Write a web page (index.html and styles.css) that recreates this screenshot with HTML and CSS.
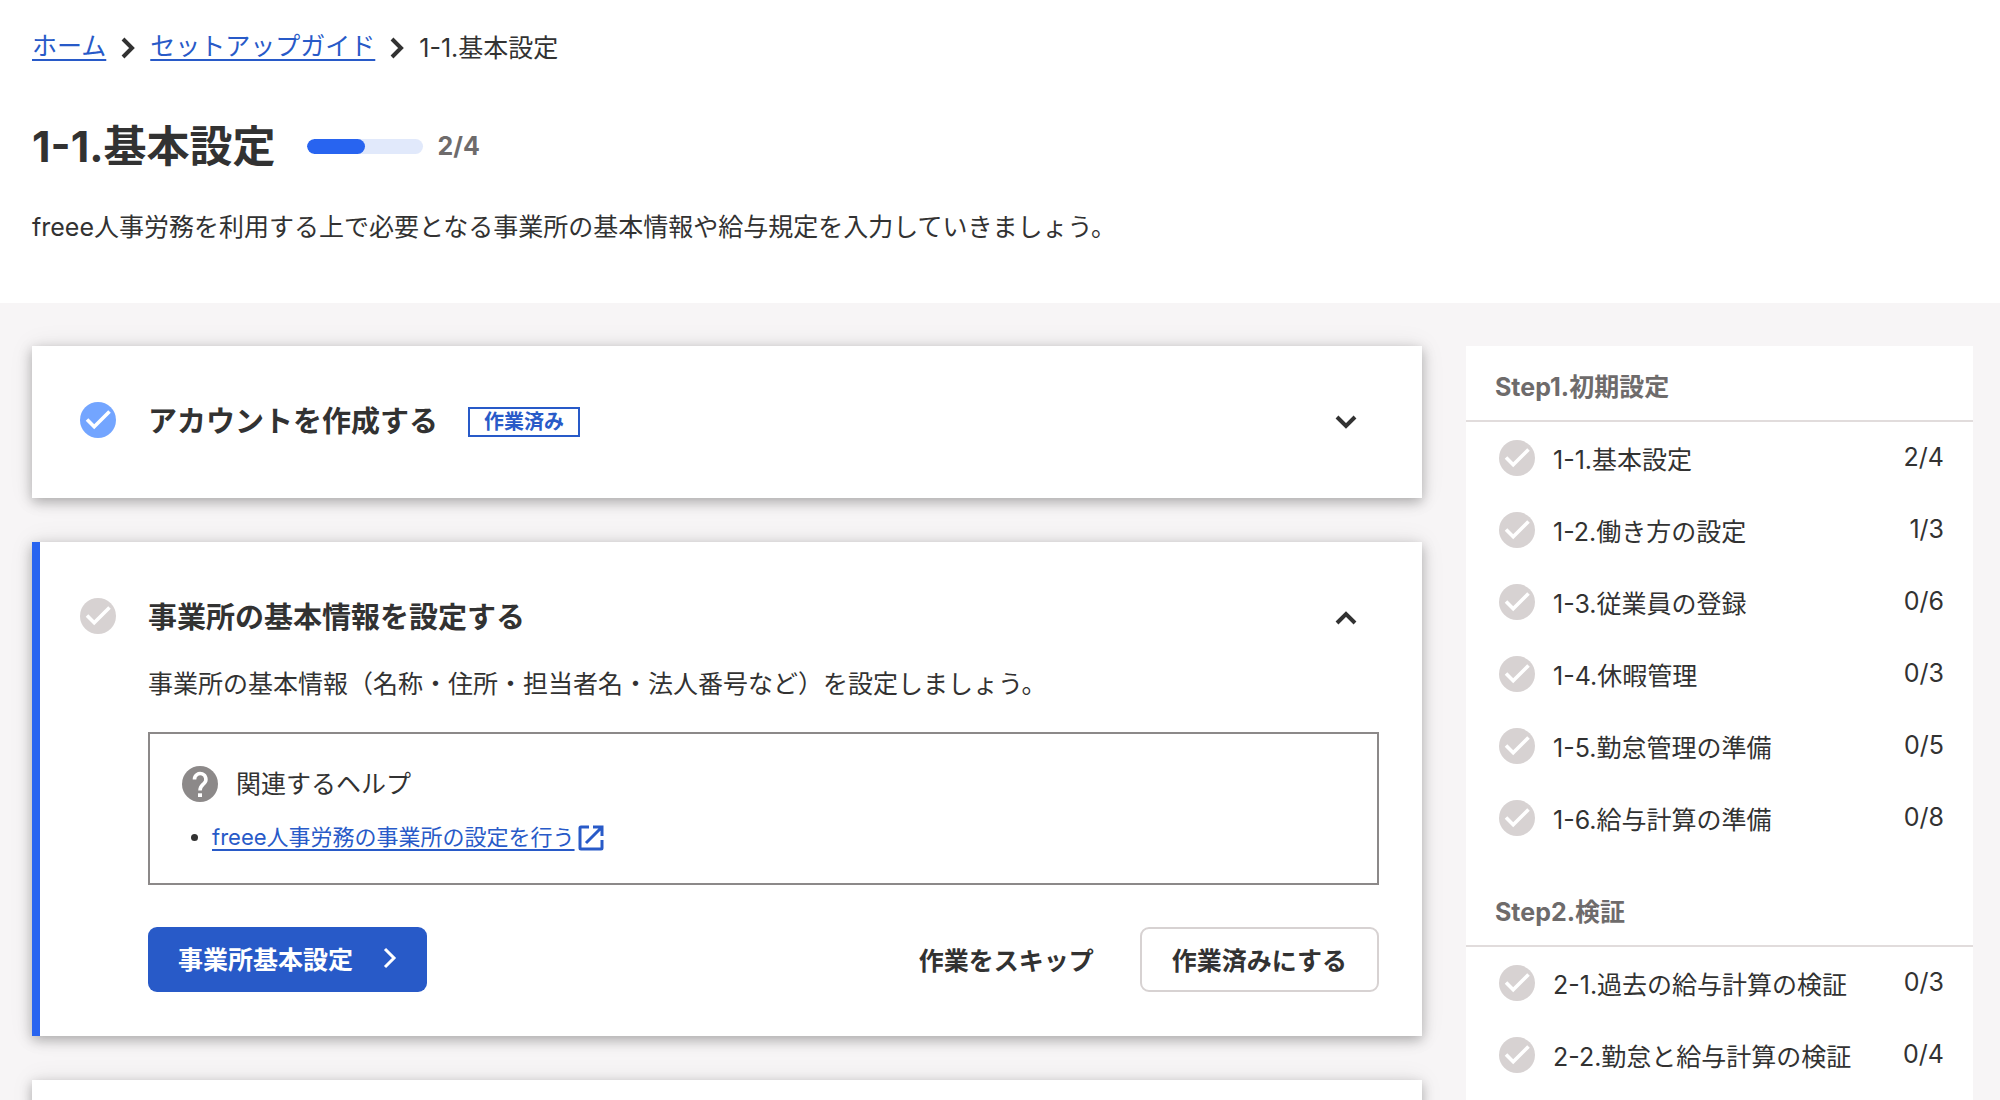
FILE: index.html
```
<!DOCTYPE html>
<html lang="ja">
<head>
  <meta charset="UTF-8">
  <title>1-1.基本設定</title>
  <link rel="stylesheet" href="styles.css">
</head>
<body>

  <!-- アイコン -->
  <svg class="sprite" aria-hidden="true">
    <symbol id="icon-check" viewBox="0 0 36 36">
      <circle cx="18" cy="18" r="18" fill="currentColor"/>
      <path d="M7 17.5l7.2 7.2L29.5 9.500" fill="none" stroke="#fff" stroke-width="3.600"/>
    </symbol>
    <symbol id="icon-right" viewBox="0 0 14 22">
      <path d="M2 2l9 9-9 9" fill="none" stroke="currentColor" stroke-width="4"/>
    </symbol>
    <symbol id="icon-next" viewBox="0 0 14 22">
      <path d="M2 2l9 9-9 9" fill="none" stroke="currentColor" stroke-width="3"/>
    </symbol>
    <symbol id="icon-down" viewBox="0 0 22 14">
      <path d="M2 2l9 9 9-9" fill="none" stroke="currentColor" stroke-width="4"/>
    </symbol>
    <symbol id="icon-up" viewBox="0 0 22 14">
      <path d="M2 12l9-9 9 9" fill="none" stroke="currentColor" stroke-width="4"/>
    </symbol>
    <symbol id="icon-help" viewBox="0 0 36 36">
      <circle cx="18" cy="18" r="18" fill="currentColor"/>
      <path d="M12.500 13.500a5.700 5.700 0 1 1 9.700 3.800c-2.300 2.300-4.200 3.200-4.200 7.200" fill="none" stroke="#fff" stroke-width="3.600"/>
      <rect x="16" y="27.300" width="4" height="3.700" fill="#fff"/>
    </symbol>
    <symbol id="icon-external" viewBox="0 0 26 26">
      <path d="M11 2H3a1 1 0 0 0-1 1v20a1 1 0 0 0 1 1h20a1 1 0 0 0 1-1v-8M15 2h9v9M24 2L8 18" fill="none" stroke="currentColor" stroke-width="3"/>
    </symbol>
  </svg>

  <header class="page-header">
    <nav class="breadcrumb">
      <a href="#">ホーム</a>
      <svg class="icon-right"><use href="#icon-right"/></svg>
      <a href="#">セットアップガイド</a>
      <svg class="icon-right"><use href="#icon-right"/></svg>
      <span class="current">1-1.基本設定</span>
    </nav>
    <div class="title">
      <h1>1-1.基本設定</h1>
      <div class="progress"><div class="progress-bar" style="width: 50%"></div></div>
      <span class="progress-count">2/4</span>
    </div>
    <p class="lead">freee人事労務を利用する上で必要となる事業所の基本情報や給与規定を入力していきましょう。</p>
  </header>

  <div class="container">
    <main class="tasks">
      <section class="card">
        <div class="card-head">
          <svg class="icon-check done"><use href="#icon-check"/></svg>
          <h2>アカウントを作成する</h2>
          <span class="badge">作業済み</span>
          <button type="button" class="toggle" aria-label="開く"><svg class="icon-toggle"><use href="#icon-down"/></svg></button>
        </div>
      </section>

      <section class="card active">
        <div class="card-head">
          <svg class="icon-check"><use href="#icon-check"/></svg>
          <h2>事業所の基本情報を設定する</h2>
          <button type="button" class="toggle" aria-label="閉じる"><svg class="icon-toggle"><use href="#icon-up"/></svg></button>
        </div>
        <div class="card-body">
          <p class="description">事業所の基本情報（名称・住所・担当者名・法人番号など）を設定しましょう。</p>
          <div class="help">
            <div class="help-title">
              <svg class="icon-help"><use href="#icon-help"/></svg>
              <span>関連するヘルプ</span>
            </div>
            <ul class="help-list">
              <li><a href="#"><span class="link-text">freee人事労務の事業所の設定を行う</span><svg class="icon-external"><use href="#icon-external"/></svg></a></li>
            </ul>
          </div>
          <div class="actions">
            <button type="button" class="btn btn-primary">事業所基本設定<svg class="icon-next"><use href="#icon-next"/></svg></button>
            <button type="button" class="btn btn-text">作業をスキップ</button>
            <button type="button" class="btn btn-outline">作業済みにする</button>
          </div>
        </div>
      </section>

      <section class="card next"></section>
    </main>

    <aside class="steps">
      <h3>Step1.初期設定</h3>
      <ul>
        <li><svg class="icon-check"><use href="#icon-check"/></svg><span class="name">1-1.基本設定</span><span class="count">2/4</span></li>
        <li><svg class="icon-check"><use href="#icon-check"/></svg><span class="name">1-2.働き方の設定</span><span class="count">1/3</span></li>
        <li><svg class="icon-check"><use href="#icon-check"/></svg><span class="name">1-3.従業員の登録</span><span class="count">0/6</span></li>
        <li><svg class="icon-check"><use href="#icon-check"/></svg><span class="name">1-4.休暇管理</span><span class="count">0/3</span></li>
        <li><svg class="icon-check"><use href="#icon-check"/></svg><span class="name">1-5.勤怠管理の準備</span><span class="count">0/5</span></li>
        <li><svg class="icon-check"><use href="#icon-check"/></svg><span class="name">1-6.給与計算の準備</span><span class="count">0/8</span></li>
      </ul>
      <h3>Step2.検証</h3>
      <ul>
        <li><svg class="icon-check"><use href="#icon-check"/></svg><span class="name">2-1.過去の給与計算の検証</span><span class="count">0/3</span></li>
        <li><svg class="icon-check"><use href="#icon-check"/></svg><span class="name">2-2.勤怠と給与計算の検証</span><span class="count">0/4</span></li>
      </ul>
    </aside>
  </div>

</body>
</html>
```
FILE: styles.css
```
* {
  box-sizing: border-box;
}

body {
  display: flex;
  flex-direction: column;
  min-height: 100vh;
  margin: 0;
  font-family: Inter, "Noto Sans CJK JP", sans-serif;
  font-size: 25px;
  line-height: 40px;
  color: #323232;
  background-color: #f7f5f6;
}

h1, h2, h3, p, ul {
  margin: 0;
  padding: 0;
}

a {
  color: #285ac8;
  text-decoration-thickness: 2px;
  text-underline-offset: 4px;
}

svg {
  display: block;
  flex-shrink: 0;
}

.sprite {
  position: absolute;
  width: 0;
  height: 0;
}

.page-header {
  padding: 30px 32px 56px;
  background-color: #fff;
}

.breadcrumb {
  display: flex;
  align-items: center;
  gap: 15px;
  line-height: 32px;
}

.breadcrumb a {
  padding-bottom: 4px;
}

.icon-right {
  width: 14px;
  height: 22px;
}

.title {
  display: flex;
  align-items: center;
  margin-top: 52px;
}

h1 {
  font-size: 43px;
  line-height: 56px;
}

.progress {
  width: 116px;
  height: 15px;
  margin-left: 31px;
  border-radius: 8px;
  background-color: #e1e9fb;
  overflow: hidden;
}

.progress-bar {
  height: 100%;
  border-radius: 8px;
  background-color: #2864f0;
}

.progress-count {
  margin-left: 15px;
  font-weight: bold;
  color: #6e6b6b;
}

.lead {
  margin-top: 33px;
}

.container {
  display: flex;
  flex: 1;
  gap: 44px;
  padding: 43px 27px 0 32px;
}

.tasks {
  display: flex;
  flex: 1;
  flex-direction: column;
  gap: 44px;
}

.card {
  padding: 54px 43px 44px 48px;
  background-color: #fff;
  box-shadow: 0 0 24px rgba(0, 0, 0, 0.08), 0 4px 12px rgba(0, 0, 0, 0.28);
}

.active {
  padding-left: 40px;
  border-left: 8px solid #2864f0;
}

.next {
  flex: 1;
  padding: 0;
}

.card-head {
  display: flex;
  align-items: center;
  height: 44px;
  margin-bottom: 10px;
}

.icon-check {
  width: 36px;
  height: 36px;
  margin-bottom: 4px;
  color: #d7d2d2;
}

.done {
  color: #73a5ff;
}

h2 {
  margin-left: 32px;
  font-size: 29px;
}

.badge {
  margin-left: 30px;
  padding: 0 14px;
  border: 2px solid #285ac8;
  font-size: 20px;
  font-weight: bold;
  line-height: 26px;
  color: #285ac8;
}

.toggle {
  margin-left: auto;
  margin-right: 12px;
  padding: 10px;
  border: none;
  background: none;
  color: #323232;
  cursor: pointer;
}

.icon-toggle {
  width: 22px;
  height: 14px;
}

.card-body {
  margin-left: 68px;
}

.description {
  padding-top: 14px;
}

.help {
  margin-top: 28px;
  padding: 32px 32px 28px;
  border: 2px solid #8c8989;
}

.help-title {
  display: flex;
  align-items: center;
  gap: 18px;
  height: 36px;
}

.icon-help {
  width: 36px;
  height: 36px;
  color: #8c8989;
}

.help-list {
  margin-top: 19px;
  padding-left: 30px;
  font-size: 22px;
  line-height: 32px;
}

.help-list a {
  display: flex;
  align-items: center;
  gap: 3px;
}

.link-text {
  padding-bottom: 2px;
}

.icon-external {
  width: 26px;
  height: 26px;
}

.actions {
  display: flex;
  gap: 16px;
  margin-top: 42px;
}

.btn {
  display: flex;
  align-items: center;
  height: 65px;
  padding: 0 28px 2px;
  border: 2px solid transparent;
  border-radius: 9px;
  font-family: inherit;
  font-size: 25px;
  font-weight: bold;
  color: #323232;
  background-color: #fff;
  cursor: pointer;
}

.btn-primary {
  gap: 30px;
  margin-right: auto;
  padding-bottom: 4px;
  color: #fff;
  background-color: #285ac8;
}

.btn-outline {
  border-color: #d7d2d2;
  padding: 0 30px 2px;
}

.icon-next {
  width: 14px;
  height: 22px;
}

.steps {
  width: 507px;
  background-color: #fff;
}

h3 {
  padding: 21px 29px 13px;
  border-bottom: 2px solid #e1dcdc;
  font-size: 25px;
  color: #6e6b6b;
}

.steps ul {
  padding-bottom: 17px;
  list-style: none;
}

.steps li {
  display: flex;
  align-items: center;
  gap: 18px;
  height: 72px;
  padding: 4px 29px 0 33px;
}

.count {
  margin-left: auto;
  padding-bottom: 6px;
}
```
